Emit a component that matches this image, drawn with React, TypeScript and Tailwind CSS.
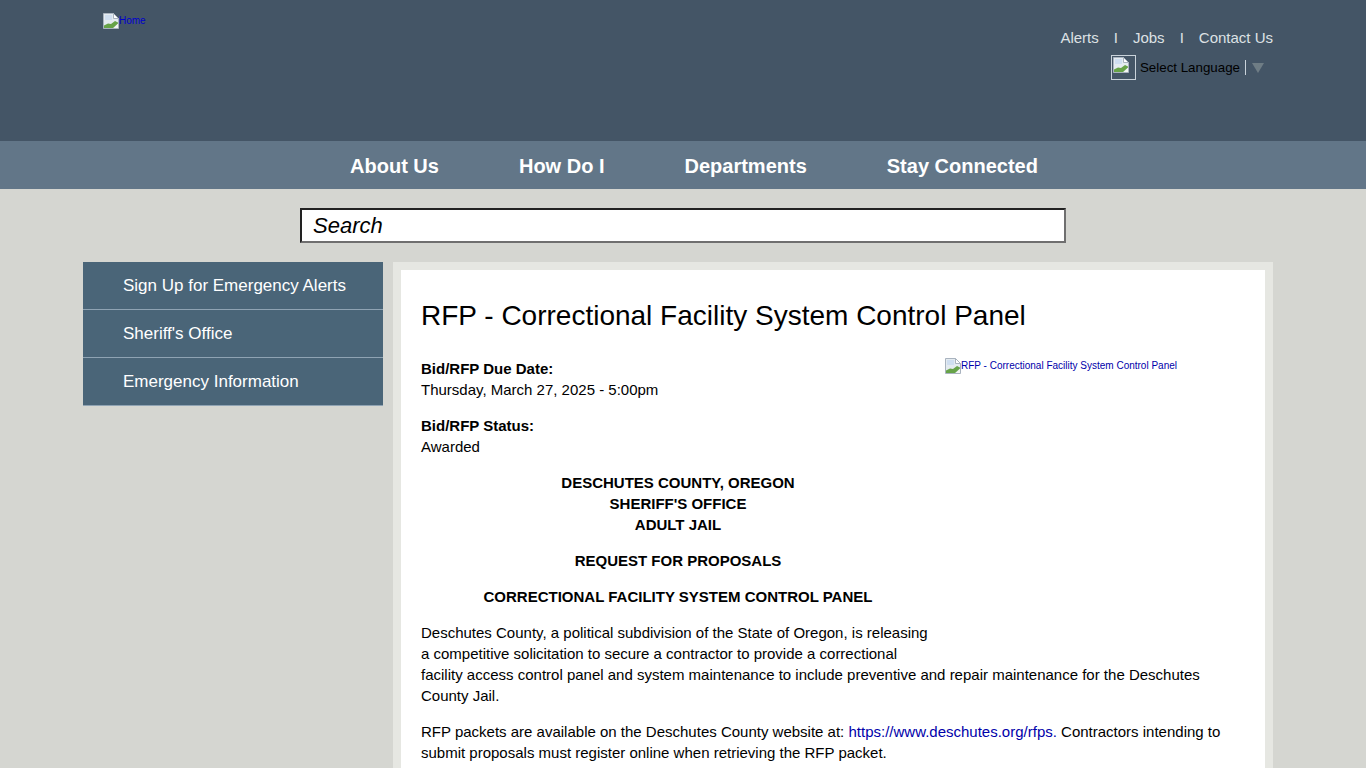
import React from "react";

function BrokenImage({ className }: { className?: string }) {
  return (
    <svg viewBox="0 0 16 16" width="16" height="16" className={className}>
      <path d="M0.5 0.5H10.5L15.5 5.5V15.5H0.5Z" fill="#e4ebf0" stroke="#a9b3bf" />
      <path d="M10.5 0.5V5.5H15.5Z" fill="#ffffff" stroke="#a9b3bf" />
      <path d="M2 2h7v5H2z" fill="#cfdef0" />
      <path d="M1 15V12.5L5 10.5L8 11L12 8L15 9.5V10.5L10 15Z" fill="#67a348" />
      <path d="M11 15L15 11V15Z" fill="#f4f6f2" />
    </svg>
  );
}

const navItems = ["About Us", "How Do I", "Departments", "Stay Connected"];
const sideItems = ["Sign Up for Emergency Alerts", "Sheriff's Office", "Emergency Information"];

function App() {
  return (
    <div className="h-screen overflow-hidden bg-[#d5d6d1] font-['Liberation_Sans',Arial,sans-serif] text-black">
      <header className="h-[141px] bg-[#445566] flex justify-between pl-[103px] pr-[93px]">
        <a className="flex items-start pt-[13px] text-[10px] leading-[16px] text-[#0000cc]">
          <BrokenImage />
          <span>Home</span>
        </a>
        <div className="flex flex-col items-end pt-[29px]">
          <div className="flex text-[15px] leading-[18px] text-[#dde1e4]">
            <span>Alerts</span>
            <span className="px-[15px]">I</span>
            <span>Jobs</span>
            <span className="px-[15px]">I</span>
            <span>Contact Us</span>
          </div>
          <div className="flex items-center mt-[8px] mr-[9px]">
            <span className="flex items-start w-[25px] h-[25px] border border-[#c9d2da] pl-[1px] pt-[1px]">
              <BrokenImage />
            </span>
            <span className="ml-[4px] text-[13.33px] text-black">Select Language</span>
            <span className="ml-[5px] h-[15px] border-l border-[#c9d2da]" />
            <svg viewBox="0 0 12 10" width="12" height="10" className="ml-[6px] mt-[1px]">
              <path d="M0 0H12L6 10Z" fill="#6f7d85" />
            </svg>
          </div>
        </div>
      </header>

      <nav className="h-[48px] bg-[#627688] flex justify-center gap-[80px] pl-[23px] pr-[1px] pt-[2px] items-center text-[20px] font-bold text-white">
        {navItems.map((item) => (
          <span key={item}>{item}</span>
        ))}
      </nav>

      <div className="pt-[19px] pl-[300px]">
        <div className="w-[766px] h-[35px] bg-white border-2 border-t-[#222222] border-l-[#222222] border-r-[#6f6f6f] border-b-[#6f6f6f] pl-[11px] flex items-center text-[22px] italic">
          Search
        </div>
      </div>

      <div className="flex pt-[19px] pl-[83px] pr-[93px] gap-[10px] items-start">
        <ul className="w-[300px] shrink-0 bg-[#4a6578] text-[17px] text-white">
          {sideItems.map((item) => (
            <li key={item} className="h-[48px] pl-[40px] pt-[14px] leading-[20px] border-b border-[#8fa3b3]">
              {item}
            </li>
          ))}
        </ul>

        <main className="flex-1 border-[8px] border-[#e6e7e2] bg-white px-[20px] pt-[28px] text-[15px] leading-[21px] h-[600px]">
          <div className="relative">
            <h1 className="text-[28px] leading-[36px] mb-[24px]">RFP - Correctional Facility System Control Panel</h1>

            <a className="absolute left-[524px] top-[60px] flex items-start text-[10px] leading-[16px] text-[#0000aa]">
              <BrokenImage />
              <span>RFP - Correctional Facility System Control Panel</span>
            </a>

            <p className="font-bold">Bid/RFP Due Date:</p>
            <p className="mb-[15px]">Thursday, March 27, 2025 - 5:00pm</p>
            <p className="font-bold">Bid/RFP Status:</p>
            <p className="mb-[15px]">Awarded</p>

            <div className="w-[514px] text-center font-bold">
              <p>DESCHUTES COUNTY, OREGON</p>
              <p>SHERIFF'S OFFICE</p>
              <p className="mb-[15px]">ADULT JAIL</p>
              <p className="mb-[15px]">REQUEST FOR PROPOSALS</p>
              <p className="mb-[15px]">CORRECTIONAL FACILITY SYSTEM CONTROL PANEL</p>
            </div>

            <p className="mb-[15px]">
              Deschutes County, a political subdivision of the State of Oregon, is releasing
              <br />
              a competitive solicitation to secure a contractor to provide a correctional
              <br />
              facility access control panel and system maintenance to include preventive and repair maintenance for the Deschutes County Jail.
            </p>
            <p>
              RFP packets are available on the Deschutes County website at: <a className="text-[#0000aa]">https://www.deschutes.org/rfps.</a> Contractors intending to submit proposals must register online when retrieving the RFP packet.
            </p>
          </div>
        </main>
      </div>
    </div>
  );
}

export default App;
